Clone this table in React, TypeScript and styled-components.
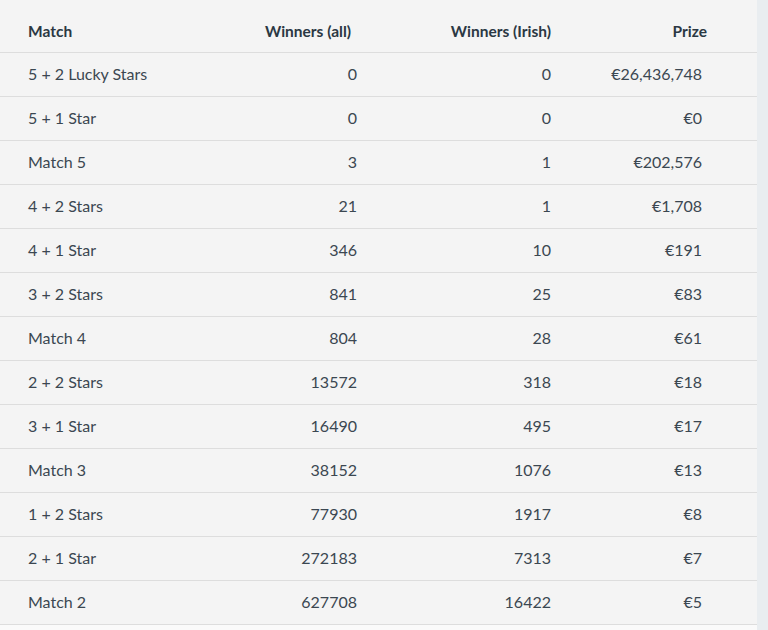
import styled, { createGlobalStyle } from "styled-components";

const GlobalStyle = createGlobalStyle`
  html, body {
    margin: 0;
    padding: 0;
    background: #fafafa;
    font-family: "Lato", "Open Sans", sans-serif;
  }
`;

const Page = styled.div`
  display: flex;
  width: 768px;
  height: 630px;
  overflow: hidden;
`;

const Main = styled.div`
  width: 757px;
  background: #fafafa;
`;

const SideStrip = styled.div`
  flex: 1;
  background: #e9edf0;
`;

const Table = styled.table`
  width: 757px;
  border-collapse: collapse;
  table-layout: fixed;
  background: #f4f4f4;
  color: #3b4751;
  font-size: 16px;
`;

const HeadCell = styled.th<{ align?: "left" | "right"; padRight?: number; padLeft?: number }>`
  height: 52px;
  box-sizing: border-box;
  padding: 10px ${({ padRight }) => padRight ?? 0}px 0 ${({ padLeft }) => padLeft ?? 0}px;
  text-align: ${({ align }) => align ?? "right"};
  font-weight: 700;
  font-size: 15.5px;
  color: #2b3843;
`;

const Row = styled.tr`
  border-top: 1px solid #dddddd;
  &:last-child {
    border-bottom: 1px solid #dddddd;
  }
`;

const Cell = styled.td<{ align?: "left" | "right"; padRight?: number; padLeft?: number }>`
  height: 44px;
  box-sizing: border-box;
  padding: 0 ${({ padRight }) => padRight ?? 0}px 2px ${({ padLeft }) => padLeft ?? 0}px;
  text-align: ${({ align }) => align ?? "right"};
  vertical-align: middle;
`;

type Result = {
  match: string;
  all: string;
  irish: string;
  prize: string;
};

const results: Result[] = [
  { match: "5 + 2 Lucky Stars", all: "0", irish: "0", prize: "€26,436,748" },
  { match: "5 + 1 Star", all: "0", irish: "0", prize: "€0" },
  { match: "Match 5", all: "3", irish: "1", prize: "€202,576" },
  { match: "4 + 2 Stars", all: "21", irish: "1", prize: "€1,708" },
  { match: "4 + 1 Star", all: "346", irish: "10", prize: "€191" },
  { match: "3 + 2 Stars", all: "841", irish: "25", prize: "€83" },
  { match: "Match 4", all: "804", irish: "28", prize: "€61" },
  { match: "2 + 2 Stars", all: "13572", irish: "318", prize: "€18" },
  { match: "3 + 1 Star", all: "16490", irish: "495", prize: "€17" },
  { match: "Match 3", all: "38152", irish: "1076", prize: "€13" },
  { match: "1 + 2 Stars", all: "77930", irish: "1917", prize: "€8" },
  { match: "2 + 1 Star", all: "272183", irish: "7313", prize: "€7" },
  { match: "Match 2", all: "627708", irish: "16422", prize: "€5" },
];

export default function App() {
  return (
    <>
      <GlobalStyle />
      <Page>
        <Main>
          <Table>
            <colgroup>
              <col style={{ width: 200 }} />
              <col style={{ width: 180 }} />
              <col style={{ width: 195 }} />
              <col style={{ width: 182 }} />
            </colgroup>
            <thead>
              <tr>
                <HeadCell align="left" padLeft={28}>Match</HeadCell>
                <HeadCell padRight={29}>Winners (all)</HeadCell>
                <HeadCell padRight={24}>Winners (Irish)</HeadCell>
                <HeadCell padRight={50}>Prize</HeadCell>
              </tr>
            </thead>
            <tbody>
              {results.map((r) => (
                <Row key={r.match}>
                  <Cell align="left" padLeft={28}>{r.match}</Cell>
                  <Cell padRight={23}>{r.all}</Cell>
                  <Cell padRight={24}>{r.irish}</Cell>
                  <Cell padRight={55}>{r.prize}</Cell>
                </Row>
              ))}
            </tbody>
          </Table>
        </Main>
        <SideStrip />
      </Page>
    </>
  );
}
